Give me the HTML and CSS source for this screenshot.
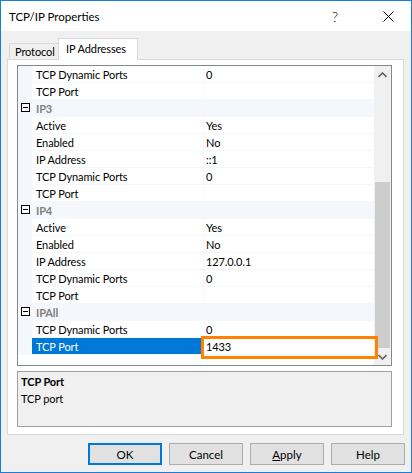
FILE: index.html
```html
<!DOCTYPE html>
<html>
<head>
<meta charset="utf-8">
<link rel="stylesheet" href="styles.css">
</head>
<body>
<div class="window">
  <div class="titlebar">
    <span class="title">TCP/IP Properties</span>
    <span class="help">?</span>
    <svg class="close" width="11" height="11" viewBox="0 0 11 11"><path d="M0.5 0.5 L10.5 10.5 M10.5 0.5 L0.5 10.5" stroke="#000" stroke-width="1" fill="none"/></svg>
  </div>
  <div class="tabs">
    <div class="tab">Protocol</div>
    <div class="tab active">IP Addresses</div>
  </div>
  <div class="panel">
    <div class="grid">
      <div class="rows">
        <div class="row"><span class="margin"></span><span class="name">TCP Dynamic Ports</span><span class="value">0</span></div>
        <div class="row"><span class="margin"></span><span class="name">TCP Port</span><span class="value"></span></div>
        <div class="cat"><span class="margin"><svg class="minus" width="9" height="9" viewBox="0 0 9 9"><rect x="0.5" y="0.5" width="8" height="8" fill="#fff" stroke="#000"/><path d="M2 4.5 H7" stroke="#000"/></svg></span><span class="catname">IP3</span></div>
        <div class="row"><span class="margin"></span><span class="name">Active</span><span class="value">Yes</span></div>
        <div class="row"><span class="margin"></span><span class="name">Enabled</span><span class="value">No</span></div>
        <div class="row"><span class="margin"></span><span class="name">IP Address</span><span class="value">::1</span></div>
        <div class="row"><span class="margin"></span><span class="name">TCP Dynamic Ports</span><span class="value">0</span></div>
        <div class="row"><span class="margin"></span><span class="name">TCP Port</span><span class="value"></span></div>
        <div class="cat"><span class="margin"><svg class="minus" width="9" height="9" viewBox="0 0 9 9"><rect x="0.5" y="0.5" width="8" height="8" fill="#fff" stroke="#000"/><path d="M2 4.5 H7" stroke="#000"/></svg></span><span class="catname">IP4</span></div>
        <div class="row"><span class="margin"></span><span class="name">Active</span><span class="value">Yes</span></div>
        <div class="row"><span class="margin"></span><span class="name">Enabled</span><span class="value">No</span></div>
        <div class="row"><span class="margin"></span><span class="name">IP Address</span><span class="value">127.0.0.1</span></div>
        <div class="row"><span class="margin"></span><span class="name">TCP Dynamic Ports</span><span class="value">0</span></div>
        <div class="row"><span class="margin"></span><span class="name">TCP Port</span><span class="value"></span></div>
        <div class="cat"><span class="margin"><svg class="minus" width="9" height="9" viewBox="0 0 9 9"><rect x="0.5" y="0.5" width="8" height="8" fill="#fff" stroke="#000"/><path d="M2 4.5 H7" stroke="#000"/></svg></span><span class="catname">IPAll</span></div>
        <div class="row"><span class="margin"></span><span class="name">TCP Dynamic Ports</span><span class="value">0</span></div>
        <div class="row selected"><span class="margin"></span><span class="name">TCP Port</span><span class="value">1433</span></div>
      </div>
      <div class="scrollbar">
        <div class="sbtn"><svg width="9" height="6" viewBox="0 0 9 6"><path d="M0.5 5 L4.5 1 L8.5 5" stroke="#606060" stroke-width="1.6" fill="none"/></svg></div>
        <div class="track"><div class="thumb"></div></div>
        <div class="sbtn"><svg width="9" height="6" viewBox="0 0 9 6"><path d="M0.5 1 L4.5 5 L8.5 1" stroke="#606060" stroke-width="1.6" fill="none"/></svg></div>
      </div>
      <div class="highlight"></div>
    </div>
    <div class="desc">
      <div class="desc-title">TCP Port</div>
      <div class="desc-text">TCP port</div>
    </div>
  </div>
  <div class="buttons">
    <button class="btn default">OK</button>
    <button class="btn">Cancel</button>
    <button class="btn"><u>A</u>pply</button>
    <button class="btn">Help</button>
  </div>
</div>
</body>
</html>
```
FILE: styles.css
```css
* { box-sizing: border-box; }
html, body { margin: 0; padding: 0; background: #f0f0f0; }
body { font-family: Lato, "Noto Sans", sans-serif; font-size: 11px; letter-spacing: -0.1px; color: #000; }
.window {
  width: 412px; height: 473px;
  border: 1px solid #1a7fd4;
  background: #f0f0f0;
  display: flex; flex-direction: column;
}
.titlebar {
  height: 30px; background: #fff;
  display: flex; align-items: center;
  padding-left: 8px;
  flex: none;
}
.title { flex: 1; font-size: 11.5px; letter-spacing: 0; padding-top: 1px; }
.help { width: 14px; margin-right: 37px; font-size: 14px; font-weight: 300; }
.close { margin-right: 17px; }
.tabs {
  display: flex; align-items: flex-end;
  height: 21px; margin: 7px 0 0 6px; padding-left: 2px;
  flex: none;
}
.tab {
  height: 16px; width: 50px;
  border: 1px solid #d9d9d9; border-bottom: none;
  background: #f0f0f0;
  line-height: 16px; padding-left: 5px;
  white-space: nowrap;
}
.tab.active {
  height: 22px; width: 80px; margin-left: -1px; margin-bottom: -1px;
  background: #fff; position: relative; z-index: 1;
  line-height: 20px; padding-left: 7px;
}
.panel {
  width: 397px; height: 376px;
  margin-left: 6px;
  border: 1px solid #d9d9d9;
  background: #fff;
  padding: 5px 0 0 9px;
  flex: none;
}
.grid {
  position: relative;
  width: 375px; height: 301px;
  border: 1px solid #828790;
  display: flex;
  background: #fff;
}
.rows { width: 356px; }
.row, .cat { display: flex; height: 17px; line-height: 17px; }
.margin { width: 14px; background: #f4f7fc; flex: none; position: relative; }
.name {
  width: 172px; padding-left: 4px;
  border-right: 1px solid #f4f7fc; border-bottom: 1px solid #f4f7fc;
  white-space: nowrap;
}
.value { width: 170px; padding-left: 2px; border-bottom: 1px solid #f4f7fc; }
.cat { background: #f4f7fc; }
.catname { padding-left: 4px; font-weight: bold; color: #808080; }
.minus { position: absolute; left: 3px; top: 3px; }
.selected .name { background: #0078d7; color: #fff; }
.scrollbar {
  width: 17px; display: flex; flex-direction: column;
  background: #f0f0f0;
}
.sbtn { height: 17px; display: flex; align-items: center; justify-content: center; flex: none; }
.track { flex: 1; display: flex; flex-direction: column; justify-content: flex-end; }
.thumb { height: 166px; margin: 0 1px; background: #cdcdcd; }
.highlight {
  position: absolute; left: 183px; top: 270px;
  width: 177px; height: 23px;
  border: 3px solid #ff8200;
}
.desc {
  width: 375px; height: 56px; margin-top: 5px;
  border: 1px solid #a0a0a0; background: #f0f0f0;
  padding: 1px 0 0 3px; line-height: 17px;
}
.desc-title { font-weight: bold; }
.buttons {
  display: flex; justify-content: flex-end; gap: 7px;
  margin-top: 8px; padding-right: 6px;
}
.btn {
  width: 74px; height: 22px;
  font-family: inherit; font-size: 11.5px; color: #000;
  background: #e1e1e1; border: 1px solid #adadad;
  padding: 0; margin: 0;
}
.btn.default { border: 2px solid #0078d7; }
```
